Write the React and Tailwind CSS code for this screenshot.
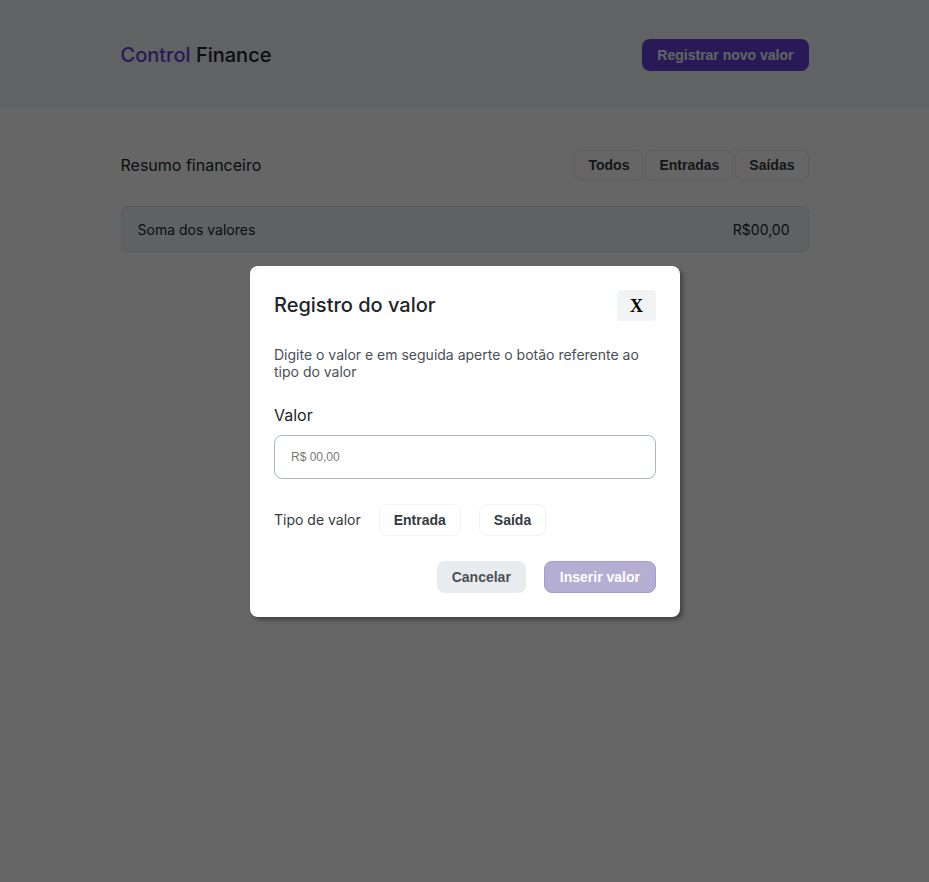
import React, { useState } from 'react';

const sans = "font-['Inter','Noto_Sans',sans-serif]";
const btnFont = "font-['Liberation_Sans',Arial,sans-serif]";

const FilterButton = ({ children }) => (
  <button className={`${btnFont} h-[30px] rounded-md border border-[#e9ecef] bg-white px-[13px] text-sm font-bold text-[#343a40]`}>
    {children}
  </button>
);

const App = () => {
  const [value, setValue] = useState('');

  return (
    <div className={`${sans} relative min-h-[882px] bg-white`}>
      {/* header */}
      <header className="h-[108px] bg-[#f0f4fb]">
        <div className="mx-auto flex h-full w-[688px] items-center justify-between pt-[2px]">
          <h1 className="text-xl font-medium leading-none">
            <span className="text-[#6741d9]">Control</span>{' '}
            <span className="text-[#212529]">Finance</span>
          </h1>
          <button className={`${btnFont} h-8 rounded-lg bg-[#6741d9] px-[15px] text-sm font-bold text-[#f8f9fa]`}>
            Registrar novo valor
          </button>
        </div>
      </header>

      <main className="mx-auto w-[688px] pt-[42px]">
        <div className="flex items-center justify-between">
          <h2 className="text-base text-[#212529]">Resumo financeiro</h2>
          <div className="flex gap-[2px]">
            <FilterButton>Todos</FilterButton>
            <FilterButton>Entradas</FilterButton>
            <FilterButton>Saídas</FilterButton>
          </div>
        </div>

        <div className="mt-[26px] flex h-[46px] items-center justify-between rounded-md border border-[#dee2e6] bg-[#f1f3f5] px-4 pt-[2px] text-sm text-[#212529]">
          <span>Soma dos valores</span>
          <span className="pr-[2px]">R$00,00</span>
        </div>
      </main>

      {/* modal overlay */}
      <div className="absolute inset-0 bg-black/60">
        <div className="ml-[250px] mt-[266px] w-[430px] rounded-lg bg-white px-6 pb-6 pt-6 shadow-[3px_3px_4px_rgba(0,0,0,0.35)]">
          <div className="flex items-center justify-between">
            <h3 className="-mt-[2px] text-xl font-medium text-[#212529]">Registro do valor</h3>
            <button className="flex h-[31px] w-[39px] items-center justify-center rounded bg-[#f1f3f5] font-['Liberation_Serif',serif] text-lg font-bold text-black">
              X
            </button>
          </div>

          <p className="mt-[25px] text-sm leading-[17px] text-[#495057]">
            Digite o valor e em seguida aperte o botão referente ao tipo do valor
          </p>

          <label className="mt-[23px] block text-base text-[#212529]">Valor</label>
          <input
            value={value}
            onChange={(e) => setValue(e.target.value)}
            placeholder="R$ 00,00"
            className={`${btnFont} mt-[8px] h-[44px] w-full rounded-lg border border-[#adb5bd] px-4 text-xs text-[#212529] placeholder:text-[#777] outline-none`}
          />

          <div className="mt-[25px] flex items-center">
            <span className="text-sm text-[#343a40]">Tipo de valor</span>
            <button className={`${btnFont} ml-[18px] h-8 rounded-lg border border-[#f1f3f5] bg-white px-[14px] text-sm font-bold text-[#343a40]`}>
              Entrada
            </button>
            <button className={`${btnFont} ml-[18px] h-8 rounded-lg border border-[#f1f3f5] bg-white px-[14px] text-sm font-bold text-[#343a40]`}>
              Saída
            </button>
          </div>

          <div className="mt-[25px] flex justify-end gap-[18px]">
            <button className={`${btnFont} ml-[1px] h-8 rounded-lg bg-[#e9ecef] px-[15px] text-sm font-bold text-[#495057]`}>
              Cancelar
            </button>
            <button className={`${btnFont} h-8 rounded-lg border border-[#a898d6] bg-[#b5aed3] px-[15px] text-sm font-bold text-white`}>
              Inserir valor
            </button>
          </div>
        </div>
      </div>
    </div>
  );
};

export default App;
